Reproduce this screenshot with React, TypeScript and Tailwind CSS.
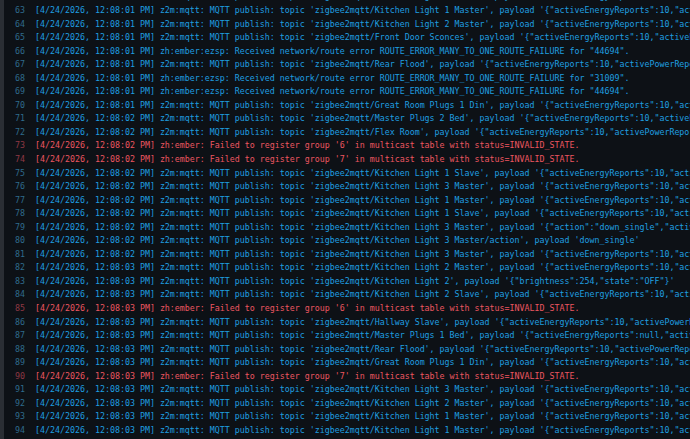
const D1 = "[4/24/2026, 12:08:01 PM]"
const D2 = "[4/24/2026, 12:08:02 PM]"
const D3 = "[4/24/2026, 12:08:03 PM]"

const energy = `'{"activeEnergyReports":10,"activePowerReports":10,"brightness":254,"color_mode":"color_temp","linkquality":120}'`

function pub(date: string, topic: string, payload = energy) {
  return `${date} z2m:mqtt: MQTT publish: topic 'zigbee2mqtt/${topic}', payload ${payload}`
}

function route(date: string, id: string) {
  return `${date} zh:ember:ezsp: Received network/route error ROUTE_ERROR_MANY_TO_ONE_ROUTE_FAILURE for "${id}".`
}

function failed(date: string, group: string) {
  return `${date} zh:ember: Failed to register group '${group}' in multicast table with status=INVALID_STATE.`
}

type Line = { n: number; text: string; error?: boolean }

const lines: Line[] = [
  { n: 62, text: pub(D1, "Kitchen Light 3 Slave") },
  { n: 63, text: pub(D1, "Kitchen Light 1 Master") },
  { n: 64, text: pub(D1, "Kitchen Light 2 Master") },
  { n: 65, text: pub(D1, "Front Door Sconces") },
  { n: 66, text: route(D1, "44694") },
  { n: 67, text: pub(D1, "Rear Flood", `'{"activeEnergyReports":10,"activePowerReports":10,"energy":1.23}'`) },
  { n: 68, text: route(D1, "31009") },
  { n: 69, text: route(D1, "44694") },
  { n: 70, text: pub(D1, "Great Room Plugs 1 Din") },
  { n: 71, text: pub(D2, "Master Plugs 2 Bed") },
  { n: 72, text: pub(D2, "Flex Room", `'{"activeEnergyReports":10,"activePowerReports":10,"energy":0.5}'`) },
  { n: 73, text: failed(D2, "6"), error: true },
  { n: 74, text: failed(D2, "7"), error: true },
  { n: 75, text: pub(D2, "Kitchen Light 1 Slave") },
  { n: 76, text: pub(D2, "Kitchen Light 3 Master") },
  { n: 77, text: pub(D2, "Kitchen Light 1 Master") },
  { n: 78, text: pub(D2, "Kitchen Light 1 Slave") },
  { n: 79, text: pub(D2, "Kitchen Light 3 Master", `'{"action":"down_single","activeEnergyReports":10}'`) },
  { n: 80, text: pub(D2, "Kitchen Light 3 Master/action", "'down_single'") },
  { n: 81, text: pub(D2, "Kitchen Light 3 Master") },
  { n: 82, text: pub(D3, "Kitchen Light 2 Master") },
  { n: 83, text: pub(D3, "Kitchen Light 2", `'{"brightness":254,"state":"OFF"}'`) },
  { n: 84, text: pub(D3, "Kitchen Light 2 Slave") },
  { n: 85, text: failed(D3, "6"), error: true },
  { n: 86, text: pub(D3, "Hallway Slave", `'{"activeEnergyReports":10,"activePowerReports":10}'`) },
  { n: 87, text: pub(D3, "Master Plugs 1 Bed", `'{"activeEnergyReports":null,"activePowerReports":null}'`) },
  { n: 88, text: pub(D3, "Rear Flood", `'{"activeEnergyReports":10,"activePowerReports":10,"energy":1.23}'`) },
  { n: 89, text: pub(D3, "Great Room Plugs 1 Din") },
  { n: 90, text: failed(D3, "7"), error: true },
  { n: 91, text: pub(D3, "Kitchen Light 3 Master") },
  { n: 92, text: pub(D3, "Kitchen Light 2 Master") },
  { n: 93, text: pub(D3, "Kitchen Light 1 Master") },
  { n: 94, text: pub(D3, "Kitchen Light 1 Master") },
]

export default function App() {
  return (
    <div className="flex h-[439px] w-[690px] overflow-hidden bg-[#0d1116]">
      <div className="w-[4px] shrink-0 bg-[#2a2e34]" />
      <div
        className="flex-1 overflow-hidden pt-0 text-[8.3px] leading-[13.55px]"
        style={{ fontFamily: '"DejaVu Sans Mono", "Liberation Mono", monospace' }}
      >
        <div className="mt-[-9.6px]">
          {lines.map((l) => (
            <div key={l.n} className="flex whitespace-pre">
              <span
                className={
                  "w-[21px] shrink-0 text-right " +
                  (l.error ? "text-[#8e3844]" : "text-[#2f6b8c]")
                }
              >
                {l.n}
              </span>
              <span className={"ml-[10px] " + (l.error ? "text-[#ec5660]" : "text-[#1f9fe0]")}>
                {l.text}
              </span>
            </div>
          ))}
        </div>
      </div>
    </div>
  )
}
